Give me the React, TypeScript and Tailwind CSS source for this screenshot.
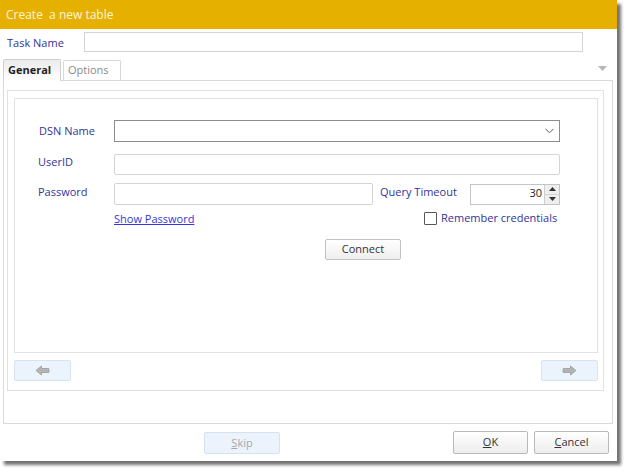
import React from 'react';

const font = { fontFamily: '"Open Sans", "Noto Sans", sans-serif' };

const ArrowLeft = () => (
  <svg width="15" height="11" viewBox="0 0 15 11">
    <path d="M1 5.5 L6.5 1 L6.5 3.5 L13.5 3.5 Q14 3.5 14 4 L14 7 Q14 7.5 13.5 7.5 L6.5 7.5 L6.5 10 Z" fill="#b4b4b4" stroke="#9c9c9c" strokeWidth="0.8" strokeLinejoin="round" />
  </svg>
);

const ArrowRight = () => (
  <svg width="15" height="11" viewBox="0 0 15 11">
    <path d="M14 5.5 L8.5 1 L8.5 3.5 L1.5 3.5 Q1 3.5 1 4 L1 7 Q1 7.5 1.5 7.5 L8.5 7.5 L8.5 10 Z" fill="#b4b4b4" stroke="#9c9c9c" strokeWidth="0.8" strokeLinejoin="round" />
  </svg>
);

const Label = ({ children }: { children: React.ReactNode }) => (
  <span className="text-[11px] text-[#333399] leading-none">{children}</span>
);

const DialogButton = ({ first, rest, disabled }: { first: string; rest: string; disabled?: boolean }) => (
  <button
    className={
      disabled
        ? 'w-[76px] h-[22px] rounded-[2px] border border-[#d3e1f1] bg-[#ecf3fc] text-[11px] text-[#a8a8a8]'
        : 'w-[75px] h-[23px] rounded-[2px] border border-[#b9b9b9] bg-gradient-to-b from-white to-[#ededed] text-[11px] text-[#333]'
    }
  >
    <span className="underline">{first}</span>
    {rest}
  </button>
);

export default function App() {
  return (
    <div className="w-[627px] h-[471px] bg-white" style={font}>
      <div className="w-[617px] h-[461px] bg-white flex flex-col shadow-[4px_4px_3px_rgba(0,0,0,0.55)]">
        {/* title bar */}
        <div className="h-[29px] bg-[#e6b000] flex items-center pl-[6px] text-[12px] text-[#fdf5dc] whitespace-pre">
          Create  a new table
        </div>

        {/* task name */}
        <div className="mt-[3px] h-[20px] flex items-center">
          <div className="w-[84px] pl-[7px] mb-[3px]">
            <Label>Task Name</Label>
          </div>
          <div className="w-[499px] h-[20px] border border-[#d4d4d4] bg-white" />
        </div>

        {/* tabs */}
        <div className="mt-[7px] h-[21px] flex items-end pl-[3px] relative">
          <div className="relative z-10 w-[58px] h-[22px] -mb-px border border-b-0 border-[#d0d0d0] rounded-t-[2px] bg-gradient-to-b from-[#ebebeb] to-white flex items-center pl-[4px] text-[11px] font-bold text-[#222]">
            General
          </div>
          <div className="ml-[2px] w-[58px] h-[20px] border border-b-0 border-[#d8d8d8] rounded-t-[2px] bg-white flex items-center pl-[4px] text-[11px] text-[#8a8a8a]">
            Options
          </div>
          <svg className="absolute right-[10px] top-[7px]" width="9" height="5" viewBox="0 0 9 5">
            <path d="M0 0 H9 L4.5 5 Z" fill="#b6b6b6" />
          </svg>
        </div>

        {/* tab page frame */}
        <div className="ml-[3px] w-[610px] h-[344px] border border-[#d9d9d9] pt-[9px] pl-[3px]">
          <div className="w-[597px] h-[301px] border border-[#e2e2e2] pl-[6px] pr-[5px] pt-[7px]">
            <div className="w-[584px] h-[255px] border border-[#e2e2e2] pl-[23px] pt-[21px] flex flex-col">
              {/* DSN */}
              <div className="h-[22px] flex items-center">
                <div className="w-[76px] pl-px mb-[5px]">
                  <Label>DSN Name</Label>
                </div>
                <div className="w-[446px] h-[22px] border border-[#8c8c8c] bg-white flex items-center justify-end pr-[5px]">
                  <svg width="9" height="6" viewBox="0 0 9 6">
                    <path d="M0.5 0.8 L4.5 4.8 L8.5 0.8" fill="none" stroke="#5a5a5a" strokeWidth="1" />
                  </svg>
                </div>
              </div>

              {/* UserID */}
              <div className="mt-[12px] h-[21px] flex items-center">
                <div className="w-[76px] mb-[9px]">
                  <Label>UserID</Label>
                </div>
                <div className="w-[446px] h-[21px] border border-[#d4d4d4] rounded-[2px] bg-white" />
              </div>

              {/* Password */}
              <div className="mt-[8px] h-[22px] flex items-center">
                <div className="w-[76px] mb-[8px]">
                  <Label>Password</Label>
                </div>
                <div className="w-[259px] h-[22px] border border-[#d4d4d4] rounded-[2px] bg-white" />
                <div className="ml-[7px] w-[90px] mb-[8px]">
                  <Label>Query Timeout</Label>
                </div>
                <div className="w-[90px] h-[21px] border border-[#c4c4c4] bg-white flex items-center justify-end">
                  <span className="text-[11px] text-[#222] pr-[2px] mb-[2px]">30</span>
                  <div className="w-[15px] h-[19px] border-l border-[#cfcfcf] bg-[#eeeeee] flex flex-col">
                    <div className="flex-1 flex items-center justify-center border-b border-[#d6d6d6]">
                      <svg width="7" height="4" viewBox="0 0 7 4">
                        <path d="M0 4 L3.5 0 L7 4 Z" fill="#333" />
                      </svg>
                    </div>
                    <div className="flex-1 flex items-center justify-center">
                      <svg width="7" height="4" viewBox="0 0 7 4">
                        <path d="M0 0 L3.5 4 L7 0 Z" fill="#333" />
                      </svg>
                    </div>
                  </div>
                </div>
              </div>

              {/* show password / remember */}
              <div className="mt-[5px] h-[16px] flex items-center">
                <div className="w-[76px]" />
                <div className="w-[310px] mb-[2px]">
                  <span className="text-[11px] text-[#3535e0] underline leading-none">Show Password</span>
                </div>
                <div className="w-[13px] h-[13px] border border-[#555] bg-white rounded-[1px]" />
                <span className="ml-[4px] mb-[2px] text-[11px] text-[#333399] leading-none">Remember credentials</span>
              </div>

              {/* connect */}
              <div className="mt-[13px] flex">
                <button className="ml-[287px] w-[76px] h-[21px] rounded-[2px] border border-[#c2c2c2] bg-gradient-to-b from-white to-[#efefef] text-[11px] text-[#333]">
                  Connect
                </button>
              </div>
            </div>

            {/* nav arrows */}
            <div className="mt-[7px] flex justify-between">
              <div className="w-[57px] h-[21px] rounded-[2px] border border-[#d5e3f2] bg-[#ebf3fc] flex items-center justify-center">
                <ArrowLeft />
              </div>
              <div className="w-[57px] h-[21px] rounded-[2px] border border-[#d5e3f2] bg-[#ebf3fc] flex items-center justify-center">
                <ArrowRight />
              </div>
            </div>
          </div>
        </div>

        {/* dialog buttons */}
        <div className="mt-[4px] flex items-start">
          <div className="ml-[204px] mt-px">
            <DialogButton first="S" rest="kip" disabled />
          </div>
          <div className="ml-[173px]">
            <DialogButton first="O" rest="K" />
          </div>
          <div className="ml-[6px]">
            <DialogButton first="C" rest="ancel" />
          </div>
        </div>
      </div>
    </div>
  );
}
